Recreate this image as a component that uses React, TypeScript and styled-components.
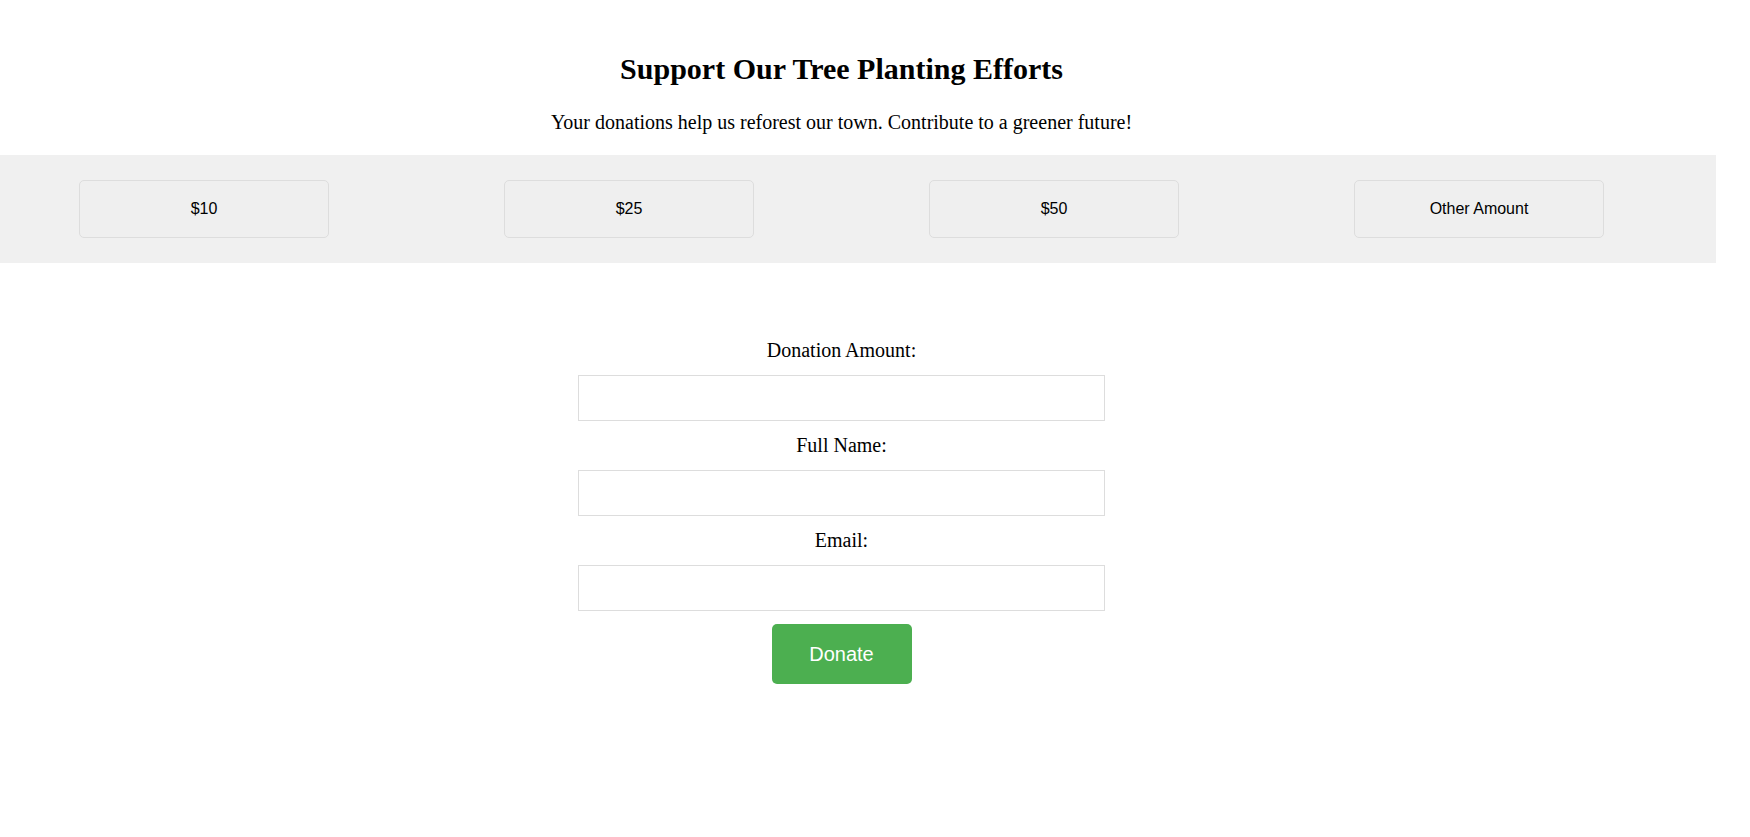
import { useState } from 'react'
import styled, { createGlobalStyle } from 'styled-components'

const AMOUNTS = ['$10', '$25', '$50', 'Other Amount']

const GlobalStyle = createGlobalStyle`
  html, body {
    margin: 0;
    padding: 0;
    background: #fff;
  }

  body {
    font-family: "Liberation Serif", "Times New Roman", serif;
    color: #000;
  }

  * {
    box-sizing: border-box;
  }
`

const Header = styled.header`
  width: 1683px;
  padding: 52px 0 21px;
  text-align: center;
`

const Title = styled.h1`
  margin: 0;
  font-size: 30px;
  line-height: 34px;
  font-weight: bold;
`

const Intro = styled.p`
  margin: 25px 0 0;
  font-size: 20px;
  line-height: 23px;
`

const AmountBand = styled.section`
  width: 1716px;
  padding: 25px 0 25px;
  background: #f0f0f0;
`

const AmountRow = styled.div`
  width: 1683px;
  display: flex;
  justify-content: center;
  gap: 175px;
`

const AmountButton = styled.button<{ $active?: boolean }>`
  width: 250px;
  padding: 19px 0;
  font-family: "Liberation Sans", Arial, sans-serif;
  font-size: 16px;
  line-height: 18px;
  color: #000;
  background: ${({ $active }) => ($active ? '#e4e4e4' : '#efefef')};
  border: 1px solid #ddd;
  border-radius: 5px;
  cursor: pointer;
`

const DonationForm = styled.form`
  width: 1683px;
  padding-top: 76px;
  display: flex;
  flex-direction: column;
  align-items: center;
`

const FieldLabel = styled.label`
  display: block;
  font-size: 20px;
  line-height: 23px;
  margin-bottom: 13px;
`

const FieldInput = styled.input`
  display: block;
  width: 527px;
  height: 46px;
  padding: 0 10px;
  margin-bottom: 13px;
  border: 1px solid #ddd;
  font-size: 16px;
  font-family: "Liberation Sans", Arial, sans-serif;
  outline: none;
`

const DonateButton = styled.button`
  width: 140px;
  height: 60px;
  padding: 0;
  font-family: "Liberation Sans", Arial, sans-serif;
  font-size: 20px;
  color: #fff;
  background: #4caf50;
  border: none;
  border-radius: 5px;
  cursor: pointer;
`

const App = () => {
  const [amount, setAmount] = useState('')
  const [picked, setPicked] = useState<string | undefined>(undefined)
  const [name, setName] = useState('')
  const [email, setEmail] = useState('')

  const pickAmount = (value: string) => {
    setPicked(value)
    if (value === 'Other Amount') setAmount('')
    else setAmount(value.replace('$', ''))
  }

  return (
    <>
      <GlobalStyle />
      <Header>
        <Title>Support Our Tree Planting Efforts</Title>
        <Intro>Your donations help us reforest our town. Contribute to a greener future!</Intro>
      </Header>

      <AmountBand>
        <AmountRow>
          {AMOUNTS.map((value) => (
            <AmountButton key={value}
                          type="button"
                          $active={picked === value}
                          onClick={() => pickAmount(value)}>
              {value}
            </AmountButton>
          ))}
        </AmountRow>
      </AmountBand>

      <DonationForm onSubmit={(e) => e.preventDefault()}>
        <FieldLabel htmlFor="amount">Donation Amount:</FieldLabel>
        <FieldInput id="amount" type="number" value={amount} onChange={(e) => setAmount(e.target.value)} />

        <FieldLabel htmlFor="name">Full Name:</FieldLabel>
        <FieldInput id="name" type="text" value={name} onChange={(e) => setName(e.target.value)} />

        <FieldLabel htmlFor="email">Email:</FieldLabel>
        <FieldInput id="email" type="email" value={email} onChange={(e) => setEmail(e.target.value)} />

        <DonateButton type="submit">Donate</DonateButton>
      </DonationForm>
    </>
  )
}

export default App
